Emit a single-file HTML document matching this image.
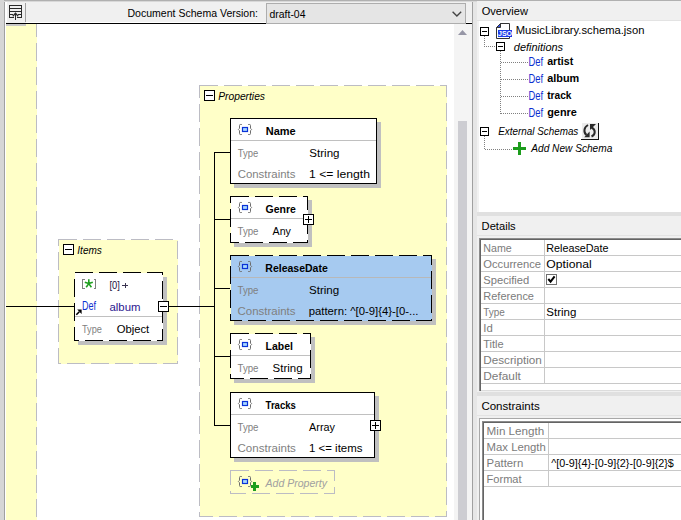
<!DOCTYPE html>
<html><head><meta charset="utf-8">
<style>
html,body{margin:0;padding:0;width:681px;height:520px;overflow:hidden;background:#f0f0f0}
svg{display:block}
text{font-family:"Liberation Sans",sans-serif;font-size:11px}
.b{font-weight:bold}
.i{font-style:italic}
.g{fill:#7f7f7f}
.lg{fill:#7b7b7b}
</style></head><body>
<svg width="681" height="520" viewBox="0 0 681 520" shape-rendering="crispEdges">
<defs>
  <g id="pi" shape-rendering="geometricPrecision">
    <path d="M3.8,0.5 H2.3 Q1.5,0.5 1.5,1.5 V4.3 L0.4,5.5 L1.5,6.7 V9.5 Q1.5,10.5 2.3,10.5 H3.8" fill="none" stroke="#6e6e6e" stroke-width="1"/>
    <path d="M10.2,0.5 H11.7 Q12.5,0.5 12.5,1.5 V4.3 L13.6,5.5 L12.5,6.7 V9.5 Q12.5,10.5 11.7,10.5 H10.2" fill="none" stroke="#6e6e6e" stroke-width="1"/>
    <rect x="4.5" y="3.5" width="5" height="4" fill="#a8d8ff" stroke="#0a32d8" stroke-width="1.2"/>
  </g>
  <g id="mb">
    <rect x="0.5" y="0.5" width="10" height="10" fill="#fff" stroke="#000"/>
    <path d="M2,5.5H9" stroke="#000"/>
  </g>
  <g id="pb">
    <rect x="0.5" y="0.5" width="10" height="10" fill="#fff" stroke="#000"/>
    <path d="M2,5.5H9M5.5,2V9" stroke="#000"/>
  </g>
  <g id="sm">
    <rect x="0.5" y="0.5" width="8" height="8" fill="#fff" stroke="#000"/>
    <path d="M2,4.5H7" stroke="#000"/>
  </g>
</defs>

<!-- ============ LEFT PANE ============ -->
<!-- outer frame -->
<rect x="0" y="0" width="681" height="1" fill="#b0b0b0"/>
<rect x="0" y="1" width="477" height="1" fill="#d8d8d8"/>
<rect x="0" y="0" width="4" height="520" fill="#d6d6d6"/>
<rect x="4" y="2" width="1" height="518" fill="#a0a0a0"/>
<rect x="5" y="2" width="1" height="518" fill="#ffffff"/>
<!-- toolbar -->
<rect x="6" y="2" width="466" height="21" fill="#f0f0f0"/>
<rect x="6" y="2" width="19" height="20" fill="#f0f0f0"/>
<rect x="25" y="3" width="1" height="19" fill="#a0a0a0"/>
<rect x="6" y="2" width="1" height="20" fill="#ffffff"/>
<g fill="#2a2a2a">
  <rect x="9" y="5" width="13" height="1"/><rect x="9" y="5" width="1" height="13"/><rect x="21" y="5" width="1" height="13"/>
  <rect x="9" y="8" width="13" height="1"/><rect x="9" y="11" width="13" height="1"/>
  <rect x="9" y="14" width="4" height="1"/><rect x="18" y="14" width="4" height="1"/>
  <rect x="9" y="17" width="5" height="1"/><rect x="17" y="17" width="5" height="1"/>
  <rect x="15" y="13" width="1" height="7"/>
</g>
<path d="M12.8,16.2L15.5,13.3L18.2,16.2" fill="none" stroke="#2a2a2a" stroke-width="1.3" shape-rendering="geometricPrecision"/>
<rect x="26" y="22" width="446" height="1" fill="#ffffff"/>
<rect x="6" y="23" width="466" height="1" fill="#000"/>
<rect x="6" y="24" width="20" height="2" fill="#c8c8c8"/>
<text x="127.5" y="17" fill="#000" textLength="130.5" lengthAdjust="spacingAndGlyphs">Document Schema Version:</text>
<rect x="266.5" y="3.5" width="199" height="20" fill="#e5e5e5" stroke="#adadad"/>
<text x="269.5" y="17.5" fill="#000" textLength="36" lengthAdjust="spacingAndGlyphs">draft-04</text>
<path d="M452.6,11.8L456.9,16L461.2,11.8" fill="none" stroke="#444" stroke-width="1.4" shape-rendering="geometricPrecision"/>

<!-- diagram canvas -->
<rect x="6" y="24" width="448" height="496" fill="#fff"/>
<rect x="6" y="26" width="20" height="0" fill="#c8c8c8"/>
<rect x="6" y="24" width="30.5" height="496" fill="#ffffc8"/>
<rect x="6" y="24" width="20" height="2" fill="#c8c8c8"/>
<path d="M36.5,24V520" stroke="#bcbcc4" stroke-dasharray="18 6" stroke-dashoffset="5"/>

<!-- scrollbar -->
<rect x="454" y="24" width="18" height="496" fill="#f4f4f4"/>
<path d="M458,35H467L462.5,30Z" fill="#9696a6" shape-rendering="geometricPrecision"/>
<rect x="458" y="121" width="9" height="399" fill="#cdcdd2"/>
<rect x="472" y="2" width="1" height="518" fill="#a0a0a0"/>
<rect x="473" y="2" width="4" height="518" fill="#e6e6e6"/>

<!-- Items (album) group -->
<rect x="58.5" y="239.5" width="119" height="124" fill="#ffffc8" stroke="#bcbcc4" stroke-dasharray="18 6"/>
<use href="#mb" x="63" y="244"/>
<text x="77.3" y="254" class="i" textLength="24.6" lengthAdjust="spacingAndGlyphs">Items</text>
<!-- inner box -->
<rect x="78" y="277" width="89" height="68" fill="#c0c0c0"/>
<rect x="74.5" y="272.5" width="88" height="68" fill="#fff" stroke="#000" stroke-dasharray="18 6"/>
<path d="M84.5,279.5H82.5V288.5H84.5M93.5,279.5H95.5V288.5H93.5" stroke="#808080" fill="none"/>
<g shape-rendering="geometricPrecision" stroke="#1f9f1f" stroke-width="1.6" stroke-linecap="butt">
  <path d="M88.8,279.2V283.6M88.8,283.6L92.8,282.2M88.8,283.6L91.4,287.2M88.8,283.6L86.2,287.2M88.8,283.6L84.8,282.2"/>
</g>
<text x="109.5" y="289.4" fill="#1a1040" textLength="10.4" lengthAdjust="spacingAndGlyphs">[0]</text>
<path d="M122,285.5H128M125,282.6V288.2" stroke="#3a3450" stroke-width="1" shape-rendering="crispEdges"/>
<text x="82" y="309.5" fill="#0c2fd0" style="font-size:12px" textLength="14" lengthAdjust="spacingAndGlyphs">Def</text>
<text x="109.5" y="310.5" fill="#2d1890" textLength="31" lengthAdjust="spacingAndGlyphs">album</text>
<g shape-rendering="geometricPrecision"><path d="M76.3,314.7L79.3,311.7" stroke="#000" stroke-width="1.6"/><path d="M77.2,309.6H81.6V314Z" fill="#000"/></g>
<rect x="75" y="316" width="87" height="1" fill="#c0c0c0"/>
<text x="82" y="333" class="g" textLength="20" lengthAdjust="spacingAndGlyphs">Type</text>
<text x="116.7" y="333" fill="#000" textLength="32.5" lengthAdjust="spacingAndGlyphs">Object</text>
<use href="#mb" x="158" y="301"/>
<!-- connectors -->
<rect x="6" y="306" width="68" height="1" fill="#000"/>

<!-- Properties group -->
<rect x="199.5" y="85.5" width="247" height="431" fill="#ffffc8" stroke="#bcbcc4" stroke-dasharray="18 6"/>
<use href="#mb" x="204" y="90"/>
<text x="218.2" y="100" class="i" textLength="46.8" lengthAdjust="spacingAndGlyphs">Properties</text>

<!-- tree connector -->
<rect x="169" y="306" width="45" height="1" fill="#000"/>
<rect x="214" y="152" width="1" height="274" fill="#000"/>
<rect x="214" y="152" width="16" height="1" fill="#000"/>
<rect x="214" y="219" width="16" height="1" fill="#000"/>
<rect x="214" y="288" width="16" height="1" fill="#000"/>
<rect x="214" y="356" width="16" height="1" fill="#000"/>
<rect x="214" y="425" width="16" height="1" fill="#000"/>

<!-- Name -->
<rect x="234" y="122" width="147" height="66" fill="#c0c0c0"/>
<rect x="230.5" y="118.5" width="146" height="65" fill="#fff" stroke="#000"/>
<rect x="231" y="140" width="145" height="1" fill="#c0c0c0"/>
<use href="#pi" x="238" y="124"/>
<text x="265.7" y="134.8" class="b">Name</text>
<text x="237.7" y="156.5" class="g" textLength="20.5" lengthAdjust="spacingAndGlyphs">Type</text>
<text x="309.3" y="157" fill="#000" textLength="30.2" lengthAdjust="spacingAndGlyphs">String</text>
<text x="237.7" y="177.5" class="g" textLength="57.7" lengthAdjust="spacingAndGlyphs">Constraints</text>
<text x="309" y="177.5" fill="#000" textLength="61" lengthAdjust="spacingAndGlyphs">1 &lt;= length</text>

<!-- Genre -->
<rect x="234" y="200" width="78" height="47" fill="#c0c0c0"/>
<rect x="230.5" y="196.5" width="77" height="46" fill="#fff" stroke="#000" stroke-dasharray="18 6"/>
<rect x="231" y="218" width="76" height="1" fill="#c0c0c0"/>
<use href="#pi" x="238" y="202"/>
<text x="265.6" y="213" class="b" textLength="30.3" lengthAdjust="spacingAndGlyphs">Genre</text>
<text x="237.5" y="234.6" class="g" textLength="21" lengthAdjust="spacingAndGlyphs">Type</text>
<text x="272.6" y="234.6" fill="#000" textLength="18.3" lengthAdjust="spacingAndGlyphs">Any</text>
<use href="#pb" x="303" y="214"/>

<!-- ReleaseDate -->
<rect x="234" y="259" width="202" height="66" fill="#c0c0c0"/>
<rect x="230.5" y="255.5" width="201" height="65" fill="#a6caf0" stroke="#000" stroke-dasharray="18 6"/>
<rect x="231" y="277" width="200" height="1" fill="#b8b8b8"/>
<use href="#pi" x="238" y="261"/>
<text x="265.3" y="271.7" class="b" textLength="62.5" lengthAdjust="spacingAndGlyphs">ReleaseDate</text>
<text x="237.5" y="294" class="g" textLength="21" lengthAdjust="spacingAndGlyphs">Type</text>
<text x="309" y="294" fill="#000" textLength="30.2" lengthAdjust="spacingAndGlyphs">String</text>
<text x="237.5" y="314.7" class="g" textLength="58" lengthAdjust="spacingAndGlyphs">Constraints</text>
<text x="308.7" y="314.7" fill="#000" textLength="109.8" lengthAdjust="spacingAndGlyphs">pattern: ^[0-9]{4}-[0-...</text>

<!-- Label -->
<rect x="234" y="337" width="81" height="46" fill="#c0c0c0"/>
<rect x="230.5" y="333.5" width="80" height="45" fill="#fff" stroke="#000" stroke-dasharray="18 6"/>
<rect x="231" y="355" width="79" height="1" fill="#c0c0c0"/>
<use href="#pi" x="238" y="339"/>
<text x="265.6" y="350" class="b" textLength="27.3" lengthAdjust="spacingAndGlyphs">Label</text>
<text x="237.5" y="371.6" class="g" textLength="21" lengthAdjust="spacingAndGlyphs">Type</text>
<text x="272.6" y="371.6" fill="#000" textLength="30" lengthAdjust="spacingAndGlyphs">String</text>

<!-- Tracks -->
<rect x="234" y="396" width="145" height="66" fill="#c0c0c0"/>
<rect x="230.5" y="392.5" width="144" height="65" fill="#fff" stroke="#000"/>
<rect x="231" y="414" width="143" height="1" fill="#c0c0c0"/>
<use href="#pi" x="238" y="398"/>
<text x="265.6" y="409" class="b" textLength="30.3" lengthAdjust="spacingAndGlyphs">Tracks</text>
<text x="237.5" y="431" class="g" textLength="21" lengthAdjust="spacingAndGlyphs">Type</text>
<text x="309.1" y="431" fill="#000" textLength="25.9" lengthAdjust="spacingAndGlyphs">Array</text>
<text x="237.5" y="452" class="g" textLength="58.4" lengthAdjust="spacingAndGlyphs">Constraints</text>
<text x="309" y="452" fill="#000" textLength="53.5" lengthAdjust="spacingAndGlyphs">1 &lt;= items</text>
<use href="#pb" x="370" y="420"/>

<!-- Add Property -->
<rect x="230.5" y="470.5" width="104" height="23" fill="none" stroke="#bcbcc4" stroke-dasharray="18 6"/>
<use href="#pi" x="238" y="476"/>
<rect x="251" y="485" width="8" height="3" fill="#1e9e1e"/><rect x="253" y="482" width="3" height="9" fill="#1e9e1e"/>
<text x="265.5" y="487" class="i" fill="#a0a0a0" textLength="61.5" lengthAdjust="spacingAndGlyphs">Add Property</text>

<!-- ============ RIGHT PANE ============ -->
<rect x="477" y="2" width="204" height="19" fill="#f0f0f0"/>
<rect x="477" y="20" width="204" height="1" fill="#e3e3e3"/>
<text x="481.7" y="14.8" fill="#000" textLength="46.2" lengthAdjust="spacingAndGlyphs">Overview</text>
<rect x="477" y="21" width="204" height="191" fill="#f2f2f2"/>
<rect x="479" y="21" width="202" height="191" fill="#fff"/>

<!-- tree -->
<g stroke="#808080" stroke-dasharray="1 1" fill="none">
  <path d="M484.5,36V46.5H496"/>
  <path d="M500.5,51V113.5"/>
  <path d="M501,62.5H528M501,79.5H528M501,96.5H528M501,113.5H528"/>
  <path d="M484.5,136V149.5H513"/>
</g>
<use href="#sm" x="480" y="27"/>
<!-- json icon -->
<g shape-rendering="geometricPrecision">
  <path d="M500.5,23.5H509.5V38.5H496.5V27.5Z" fill="#fff" stroke="#333"/>
  <path d="M496.5,27.5L500.5,23.5V27.5Z" fill="#3050e0" stroke="#333"/>
  <rect x="498" y="30" width="14" height="7" fill="#1a3ae8"/>
  <text x="505" y="36.3" text-anchor="middle" style="font-size:7px;font-weight:bold" fill="#fff">JSO</text>
</g>
<text x="515.7" y="34.2" fill="#000" textLength="128.7" lengthAdjust="spacingAndGlyphs">MusicLibrary.schema.json</text>
<use href="#sm" x="496" y="42"/>
<text x="513.8" y="51.3" class="i" fill="#000" textLength="49.3" lengthAdjust="spacingAndGlyphs">definitions</text>
<g fill="#0c2fd0">
  <text x="528.5" y="65.8" textLength="14.6" lengthAdjust="spacingAndGlyphs" style="font-size:12px">Def</text>
  <text x="528.5" y="82.8" textLength="14.6" lengthAdjust="spacingAndGlyphs" style="font-size:12px">Def</text>
  <text x="528.5" y="99.8" textLength="14.6" lengthAdjust="spacingAndGlyphs" style="font-size:12px">Def</text>
  <text x="528.5" y="116.8" textLength="14.6" lengthAdjust="spacingAndGlyphs" style="font-size:12px">Def</text>
</g>
<text x="547.2" y="65" class="b" textLength="26" lengthAdjust="spacingAndGlyphs">artist</text>
<text x="547.2" y="82" class="b" textLength="32" lengthAdjust="spacingAndGlyphs">album</text>
<text x="547.2" y="99" class="b" textLength="24.3" lengthAdjust="spacingAndGlyphs">track</text>
<text x="547.2" y="116" class="b" textLength="29.7" lengthAdjust="spacingAndGlyphs">genre</text>
<use href="#sm" x="480" y="127"/>
<text x="498.3" y="134.5" class="i" fill="#000" textLength="80" lengthAdjust="spacingAndGlyphs">External Schemas</text>
<rect x="582" y="123" width="16" height="16" fill="#ececec"/>
<rect x="598" y="123" width="1" height="17" fill="#111"/>
<rect x="581" y="139" width="18" height="1" fill="#111"/>
<g shape-rendering="geometricPrecision">
  <path d="M588,125 C583.5,127.5 583.5,132.5 586.5,135" fill="none" stroke="#2a2a2a" stroke-width="2"/>
  <path d="M584.2,137.2 L589.6,137.2 L589.6,131.6 Z" fill="#2a2a2a"/>
  <path d="M591.5,127.5 C595.8,129.5 595.8,134.5 591.5,136.5" fill="none" stroke="#2a2a2a" stroke-width="2"/>
  <path d="M590,124 L596,124 L590,130 Z" fill="#2a2a2a"/>
</g>
<rect x="513" y="147" width="13" height="3" fill="#1c9c1c"/><rect x="518" y="142" width="3" height="13" fill="#1c9c1c"/>
<text x="531.3" y="152.2" class="i" fill="#000" textLength="81" lengthAdjust="spacingAndGlyphs">Add New Schema</text>

<!-- gray band -->
<rect x="477" y="212" width="204" height="4" fill="#e0e0e0"/>
<!-- details header -->
<rect x="477" y="216" width="204" height="19" fill="#f0f0f0"/>
<rect x="477" y="235" width="204" height="1" fill="#e3e3e3"/>
<text x="481.6" y="230" fill="#000" textLength="34.1" lengthAdjust="spacingAndGlyphs">Details</text>
<!-- details table -->
<rect x="477" y="236" width="204" height="156" fill="#f0f0f0"/>
<rect x="479" y="238" width="202" height="153" fill="#dcdcdc"/>
<rect x="481" y="240" width="200" height="150" fill="#fff"/>
<rect x="479" y="238" width="202" height="1" fill="#8c8c8c"/>
<rect x="479" y="238" width="1" height="153" fill="#8c8c8c"/>
<rect x="480" y="239" width="201" height="1" fill="#646464"/>
<rect x="480" y="239" width="1" height="152" fill="#646464"/>
<g fill="#c8c8c8">
  <rect x="481" y="255" width="200" height="1"/>
  <rect x="481" y="271" width="200" height="1"/>
  <rect x="481" y="287" width="200" height="1"/>
  <rect x="481" y="303" width="200" height="1"/>
  <rect x="481" y="319" width="200" height="1"/>
  <rect x="481" y="335" width="200" height="1"/>
  <rect x="481" y="351" width="200" height="1"/>
  <rect x="481" y="367" width="200" height="1"/>
  <rect x="481" y="383" width="200" height="1"/>
  <rect x="544" y="240" width="1" height="144"/>
</g>
<g class="lg">
  <text x="483.3" y="251.7" class="lg" textLength="28.4" lengthAdjust="spacingAndGlyphs">Name</text>
  <text x="483.3" y="267.7" class="lg" textLength="57.8" lengthAdjust="spacingAndGlyphs">Occurrence</text>
  <text x="483.3" y="283.7" class="lg" textLength="46" lengthAdjust="spacingAndGlyphs">Specified</text>
  <text x="483.3" y="299.7" class="lg" textLength="50.7" lengthAdjust="spacingAndGlyphs">Reference</text>
  <text x="483.3" y="315.7" class="lg" textLength="21.6" lengthAdjust="spacingAndGlyphs">Type</text>
  <text x="483.3" y="331.7" class="lg" textLength="9.5" lengthAdjust="spacingAndGlyphs">Id</text>
  <text x="483.3" y="347.7" class="lg" textLength="20.4" lengthAdjust="spacingAndGlyphs">Title</text>
  <text x="483.3" y="363.7" class="lg" textLength="58.5" lengthAdjust="spacingAndGlyphs">Description</text>
  <text x="483.3" y="379.7" class="lg" textLength="37.6" lengthAdjust="spacingAndGlyphs">Default</text>
</g>
<text x="546.3" y="251.7" fill="#000" textLength="62.3" lengthAdjust="spacingAndGlyphs">ReleaseDate</text>
<text x="546.3" y="267.7" fill="#000" textLength="45.4" lengthAdjust="spacingAndGlyphs">Optional</text>
<rect x="546.5" y="274.5" width="10" height="10" fill="#fff" stroke="#707070"/>
<path d="M548.3,279L550.6,281.6L554.6,276.4" fill="none" stroke="#000" stroke-width="2" shape-rendering="geometricPrecision"/>
<text x="546.3" y="315.7" fill="#000" textLength="30" lengthAdjust="spacingAndGlyphs">String</text>

<!-- gray band 2 -->
<rect x="477" y="392" width="204" height="4" fill="#e0e0e0"/>
<rect x="477" y="396" width="204" height="20" fill="#f0f0f0"/>
<text x="481.4" y="410" fill="#000" textLength="58.3" lengthAdjust="spacingAndGlyphs">Constraints</text>
<rect x="477" y="416" width="204" height="104" fill="#f0f0f0"/>
<rect x="477" y="415" width="204" height="1" fill="#e3e3e3"/>
<rect x="479" y="418" width="202" height="102" fill="#a8a8a8"/>
<rect x="480" y="419" width="201" height="101" fill="#ffffff"/>
<rect x="482" y="421" width="199" height="99" fill="#8c8c8c"/>
<rect x="483" y="422" width="198" height="98" fill="#646464"/>
<rect x="484" y="423" width="197" height="97" fill="#fff"/>
<g fill="#c8c8c8">
  <rect x="484" y="438" width="197" height="1"/>
  <rect x="484" y="454" width="197" height="1"/>
  <rect x="484" y="470" width="197" height="1"/>
  <rect x="484" y="486" width="197" height="1"/>
  <rect x="548" y="423" width="1" height="63"/>
</g>
<text x="486.6" y="435" class="lg" textLength="57.7" lengthAdjust="spacingAndGlyphs">Min Length</text>
<text x="486.6" y="451" class="lg" textLength="59.2" lengthAdjust="spacingAndGlyphs">Max Length</text>
<text x="486.6" y="467" class="lg" textLength="36.6" lengthAdjust="spacingAndGlyphs">Pattern</text>
<text x="486.6" y="483" class="lg" textLength="35" lengthAdjust="spacingAndGlyphs">Format</text>
<text x="551.2" y="467" fill="#000" textLength="122.7" lengthAdjust="spacingAndGlyphs">^[0-9]{4}-[0-9]{2}-[0-9]{2}$</text>
</svg>
</body></html>
